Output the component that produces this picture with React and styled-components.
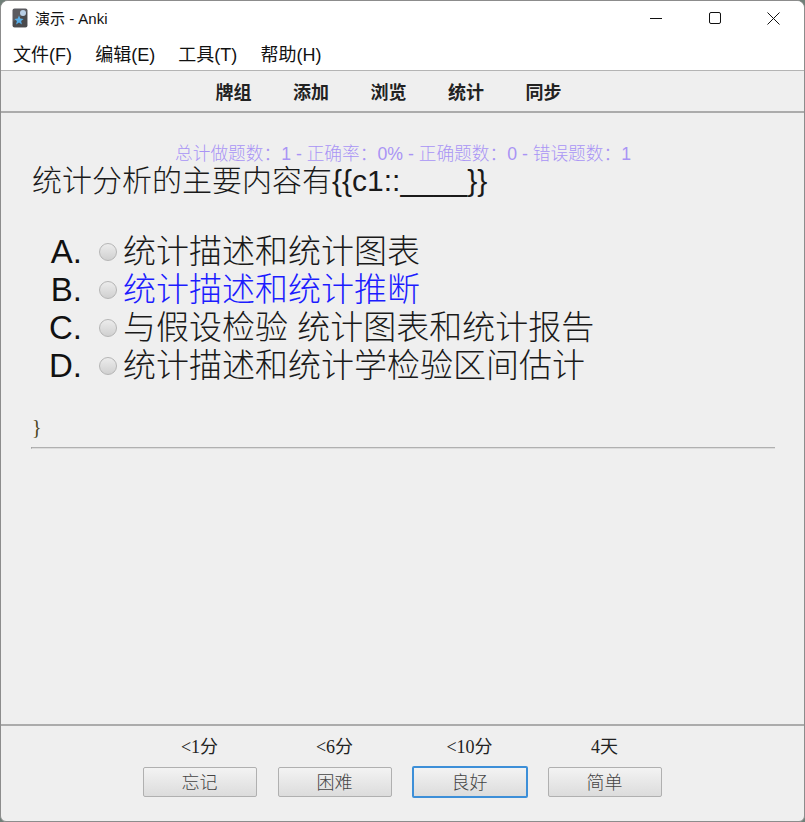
import React from "react";
import styled, { createGlobalStyle } from "styled-components";

const GlobalStyle = createGlobalStyle`
  html, body {
    margin: 0;
    padding: 0;
    background: #6f7f78;
  }
`;

const Window = styled.div`
  width: 805px;
  height: 822px;
  box-sizing: border-box;
  border: 1px solid #8c8c8c;
  border-radius: 8px 8px 6px 6px;
  overflow: hidden;
  display: flex;
  flex-direction: column;
  background: #efefef;
  font-family: "Liberation Sans", "Noto Sans CJK SC", sans-serif;
`;

const TitleBar = styled.div`
  height: 35px;
  flex: none;
  box-sizing: border-box;
  background: #fff;
  display: flex;
  align-items: center;
  padding: 0 1px 1px 11px;
  font-size: 15px;
  color: #111;
`;

const TitleText = styled.span`
  margin: 0 0 2px 7px;
  flex: 1;
`;

const WinButton = styled.div`
  width: 59px;
  height: 34px;
  display: flex;
  align-items: center;
  justify-content: center;
`;

const MenuBar = styled.div`
  height: 35px;
  flex: none;
  box-sizing: border-box;
  background: #fff;
  border-bottom: 1px solid #b4b4b4;
  display: flex;
  align-items: center;
  gap: 23.2px;
  padding: 0 0 1px 12px;
  font-size: 18px;
  color: #111;
`;

const Toolbar = styled.div`
  height: 42px;
  flex: none;
  box-sizing: border-box;
  border-bottom: 2px solid #ababab;
  display: flex;
  align-items: center;
  justify-content: center;
  gap: 25.5px;
  padding: 0 28px 0 0;
  font-size: 18px;
  font-weight: 700;
  color: #222;
  font-family: "Liberation Serif", "Noto Sans CJK SC", serif;
`;

const ToolLink = styled.span`
  width: 52px;
  text-align: center;
`;

const Reviewer = styled.div`
  flex: 1;
  min-height: 0;
  display: flex;
  flex-direction: column;
  padding: 30px 30px 0;
`;

const Stats = styled.div`
  text-align: center;
  font-size: 17.7px;
  line-height: 22px;
  color: #a994f5;
  font-weight: 300;
  padding-left: 1px;
`;

const Question = styled.div`
  font-size: 30px;
  line-height: 38px;
  color: #1a1a1a;
  margin: -3px 0 0 1px;
  font-weight: 300;
`;

const Choices = styled.div`
  display: flex;
  flex-direction: column;
  margin-top: 33px;
`;

const Choice = styled.div`
  height: 38px;
  line-height: 38px;
  display: flex;
  align-items: center;
  font-size: 33px;
  font-weight: 300;
  color: ${(p) => (p.$correct ? "#1c1cff" : "#1a1a1a")};
`;

const Letter = styled.span`
  width: 51px;
  margin-right: 17px;
  text-align: right;
  color: #111;
  font-weight: 400;
`;

const Radio = styled.span`
  width: 18px;
  height: 18px;
  flex: none;
  margin-right: 6px;
  border-radius: 50%;
  box-sizing: border-box;
  border: 1px solid #b5b5b5;
  background: linear-gradient(#ececec, #d0d0d0);
`;

const Brace = styled.div`
  margin-top: 29px;
  margin-left: 1px;
  font-family: "Liberation Serif", serif;
  font-size: 20px;
  line-height: 26px;
  color: #4a4420;
`;

const Rule = styled.hr`
  margin: 7px 0 0;
  border: 0;
  border-top: 1px solid #b0b0b0;
  border-bottom: 1px solid #dcdcdc;
  border-left: 1px solid #999;
  width: 743px;
  height: 0;
`;

const Footer = styled.div`
  height: 97px;
  flex: none;
  box-sizing: border-box;
  border-top: 2px solid #ababab;
  display: flex;
  justify-content: center;
  gap: 21px;
  padding: 11px 1px 0 0;
`;

const Answer = styled.div`
  width: 114px;
  display: flex;
  flex-direction: column;
  align-items: center;
  gap: 10px;
`;

const Due = styled.div`
  font-family: "Liberation Serif", "Noto Sans CJK SC", serif;
  font-size: 18px;
  line-height: 20px;
  color: #222;
`;

const AnswerButton = styled.button`
  width: ${(p) => (p.$focused ? "116px" : "114px")};
  height: ${(p) => (p.$focused ? "32px" : "30px")};
  margin-top: ${(p) => (p.$focused ? "-1px" : "0")};
  flex: none;
  box-sizing: border-box;
  padding: 0 0 4px;
  border-radius: 2px;
  border: ${(p) => (p.$focused ? "2px solid #3d8fd8" : "1px solid #b0b0b0")};
  background: linear-gradient(#f3f3f3, #dcdcdc);
  font-family: "Liberation Sans", "Noto Sans CJK SC", sans-serif;
  font-size: 18px;
  font-weight: 300;
  color: #444;
`;

const AnkiIcon = () => (
  <svg width="16" height="20" viewBox="0 0 16 20">
    <rect x="0.5" y="0.5" width="15" height="19" rx="2" fill="#5b5b60" />
    <path d="M1 14 L15 4 V18 a1 1 0 0 1 -1 1 H2 a1 1 0 0 1 -1 -1 Z" fill="#4a4a4d" />
    <circle cx="11" cy="5" r="3" fill="#b9cfe6" />
    <path
      d="M7 7.5 L8.3 10.6 L11.6 10.9 L9.1 13.1 L9.9 16.4 L7 14.6 L4.1 16.4 L4.9 13.1 L2.4 10.9 L5.7 10.6 Z"
      fill="#58aee8"
    />
  </svg>
);

const choices = [
  { letter: "A.", text: "统计描述和统计图表" },
  { letter: "B.", text: "统计描述和统计推断", correct: true },
  { letter: "C.", text: "与假设检验 统计图表和统计报告" },
  { letter: "D.", text: "统计描述和统计学检验区间估计" },
];

const answers = [
  { due: "<1分", label: "忘记" },
  { due: "<6分", label: "困难" },
  { due: "<10分", label: "良好", focused: true },
  { due: "4天", label: "简单" },
];

export default function App() {
  return (
    <Window>
      <GlobalStyle />
      <TitleBar>
        <AnkiIcon />
        <TitleText>演示 - Anki</TitleText>
        <WinButton>
          <svg width="12" height="12" viewBox="0 0 12 12">
            <path d="M0 6.5 H12" stroke="#111" strokeWidth="1" />
          </svg>
        </WinButton>
        <WinButton>
          <svg width="12" height="12" viewBox="0 0 12 12">
            <rect x="0.5" y="0.5" width="11" height="11" rx="1.5" fill="none" stroke="#111" />
          </svg>
        </WinButton>
        <WinButton>
          <svg width="13" height="13" viewBox="0 0 13 13">
            <path d="M0.5 0.5 L12.5 12.5 M12.5 0.5 L0.5 12.5" stroke="#111" strokeWidth="1" />
          </svg>
        </WinButton>
      </TitleBar>
      <MenuBar>
        <span>文件(F)</span>
        <span>编辑(E)</span>
        <span>工具(T)</span>
        <span>帮助(H)</span>
      </MenuBar>
      <Toolbar>
        <ToolLink>牌组</ToolLink>
        <ToolLink>添加</ToolLink>
        <ToolLink>浏览</ToolLink>
        <ToolLink>统计</ToolLink>
        <ToolLink>同步</ToolLink>
      </Toolbar>
      <Reviewer>
        <Stats>总计做题数：1 - 正确率：0% - 正确题数：0 - 错误题数：1</Stats>
        <Question>统计分析的主要内容有{"{{c1::____}}"}</Question>
        <Choices>
          {choices.map((c) => (
            <Choice key={c.letter} $correct={c.correct}>
              <Letter>{c.letter}</Letter>
              <Radio />
              {c.text}
            </Choice>
          ))}
        </Choices>
        <Brace>{"}"}</Brace>
        <Rule />
      </Reviewer>
      <Footer>
        {answers.map((a) => (
          <Answer key={a.label}>
            <Due>{a.due}</Due>
            <AnswerButton $focused={a.focused}>{a.label}</AnswerButton>
          </Answer>
        ))}
      </Footer>
    </Window>
  );
}
